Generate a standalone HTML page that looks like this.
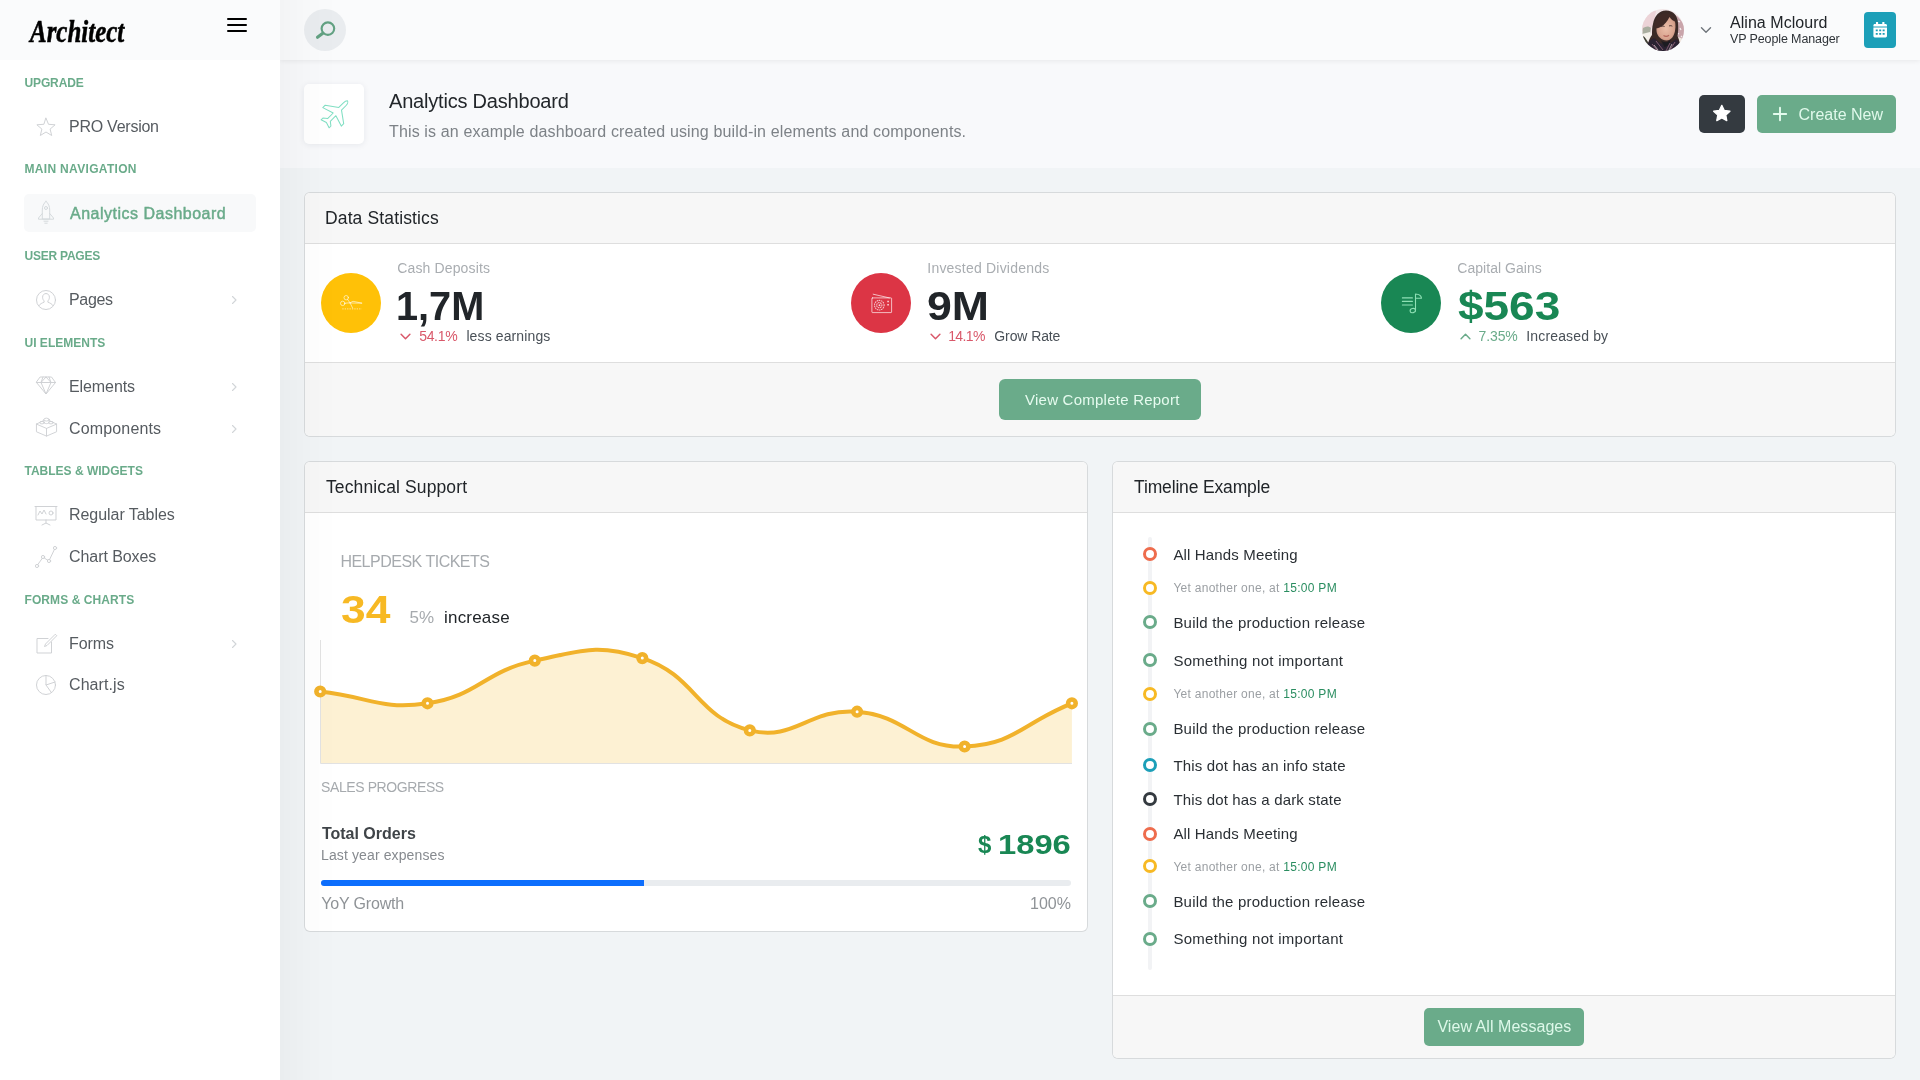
<!DOCTYPE html>
<html lang="en">
<head>
<meta charset="utf-8">
<title>Analytics Dashboard - Architect</title>
<style>
*{box-sizing:border-box;margin:0;padding:0}
html,body{width:1920px;height:1080px;overflow:hidden}
body{position:relative;background:#f1f4f6;font-family:"Liberation Sans",sans-serif;color:#212529;font-size:16px;-webkit-font-smoothing:antialiased}
.abs{position:absolute}
.t{position:absolute;white-space:nowrap;line-height:1}
svg{display:block;overflow:visible}

/* ---------- sidebar ---------- */
#sidebar{z-index:11;position:absolute;left:0;top:0;width:280px;height:1080px;background:#fff}
#sbshadow{z-index:10;position:absolute;left:0;top:-200px;width:280px;height:1480px;box-shadow:7px 0 60px rgba(0,0,0,.05)}
#sbhead{position:absolute;left:0;top:0;width:280px;height:60px;background:#fafbfc}
.logo{left:29.500px;top:14.500px;font-family:"Liberation Serif",serif;font-style:italic;font-weight:bold;font-size:32px;color:#000;-webkit-text-stroke:.55px #000;transform:scaleX(.78);transform-origin:0 0}
.burger{position:absolute;left:227px;top:18px;width:20px;height:14px}
.burger i{position:absolute;left:0;width:20px;height:2px;background:#000;border-radius:1px}
.sh{position:absolute;left:24.5px;font-weight:bold;font-size:12px;color:#6aab8a;white-space:nowrap;line-height:12px}
.mi{position:absolute;left:24px;width:232px;height:38px;border-radius:5px}
.mi.active{background:#f8f9fa}
.mi .lbl{position:absolute;left:45px;top:11px;font-size:16px;line-height:18px;color:#565b60;white-space:nowrap}
.mi.active .lbl{color:#6aab8a;-webkit-text-stroke:.45px #6aab8a}
.mi .ic{position:absolute;left:10px;top:8px;width:24px;height:24px}
.mi .ic svg{width:24px;height:24px;fill:none;stroke:#cdd0d3;stroke-width:.95;stroke-linecap:round;stroke-linejoin:round}
.mi .car{position:absolute;left:206px;top:14.500px;width:8px;height:10px}
.mi .car svg{width:8px;height:10px;fill:none;stroke:#d2d5d8;stroke-width:1.1;stroke-linecap:round;stroke-linejoin:round}

/* ---------- header ---------- */
#header{z-index:5;position:absolute;left:280px;top:0;width:1640px;height:60px;background:#fafbfc;box-shadow:0 1px 5px rgba(0,0,0,.07)}
.search{position:absolute;left:24px;top:9px;width:42px;height:42px;border-radius:50%;background:#e9ecef}
.avatar{position:absolute;left:1362px;top:9px;width:42px;height:42px;border-radius:50%;overflow:hidden}
.calbtn{position:absolute;left:1584px;top:12px;width:32px;height:36px;border-radius:4px;background:#1c9fb8}

/* ---------- page title ---------- */
#ptitle{position:absolute;left:280px;top:60px;width:1640px;height:108px;background:#f8f9fb}
.picon{position:absolute;left:24px;top:24px;width:60px;height:60px;background:#fff;border-radius:5px;box-shadow:0 1px 6px rgba(20,40,60,.08)}
.btn{position:absolute;border-radius:4px;color:#fff;white-space:nowrap}
.g{background:#6aab8a}

/* ---------- cards ---------- */
.card{position:absolute;background:#fff;border:1px solid rgba(0,0,0,.105);background-clip:padding-box;border-radius:6px;overflow:hidden}
.chead{position:absolute;left:0;top:0;right:0;height:51px;background:#f7f7f7;border-bottom:1px solid #dedede}
.chead span{position:absolute;left:20px;top:16px;font-size:17px;line-height:19px;color:#212529;white-space:nowrap;letter-spacing:.1px}
.cfoot{position:absolute;left:0;right:0;bottom:0;background:#f7f7f7;border-top:1px solid #dedede}
</style>
</head>
<body>
<div id="root" style="position:absolute;left:0;top:0;width:1920px;height:1080px;will-change:transform">

<!-- ================= SIDEBAR ================= -->
<div id="sbshadow"></div>
<aside id="sidebar">
  <div id="sbhead">
    <div class="t logo">Architect</div>
    <div class="burger"><i style="top:0"></i><i style="top:6px"></i><i style="top:12px"></i></div>
  </div>
  <div class="sh" style="top:77px;letter-spacing:-0.13px">UPGRADE</div>
  <div class="mi" style="top:107px">
    <div class="ic"><svg viewBox="0 0 24 24"><path d="M12 3.2l2.5 6.1 6.6.5-5 4.3 1.6 6.4L12 17l-5.7 3.5 1.6-6.4-5-4.3 6.6-.5z"/></svg></div>
    <div class="lbl" style="letter-spacing:-0.25px">PRO Version</div>
  </div>
  <div class="sh" style="top:163px;letter-spacing:0.32px">MAIN NAVIGATION</div>
  <div class="mi active" style="top:194px">
    <div class="ic" style="top:5.500px"><svg viewBox="0 0 24 24" style="stroke:#d3d8db"><path d="M12 1.300c-2.500 2.200-3.700 5.200-3.700 8.700v9h7.400v-9c0-3.500-1.200-6.500-3.700-8.700z"/><circle cx="12" cy="8" r="1.500"/><path d="M8.300 13.500l-3.800 4.500v1.200h15v-1.200l-3.800-4.500M10 21.200h4M10.800 23.200h2.400"/></svg></div>
    <div class="lbl" style="left:46px;letter-spacing:.5px">Analytics Dashboard</div>
  </div>
  <div class="sh" style="top:250px;letter-spacing:-0.23px">USER PAGES</div>
  <div class="mi" style="top:280px">
    <div class="ic"><svg viewBox="0 0 24 24"><circle cx="12" cy="12" r="9.500"/><path d="M12 5.500c-2 0-3.400 1.500-3.400 3.700 0 1.500.6 2.900 1.500 3.700v1.300c-1.800.7-4.300 1.700-5.100 3.400M12 5.500c2 0 3.400 1.500 3.400 3.700 0 1.500-.6 2.900-1.500 3.700v1.300c1.800.7 4.300 1.700 5.100 3.400"/></svg></div>
    <div class="lbl" style="letter-spacing:-0.33px">Pages</div>
    <div class="car"><svg viewBox="0 0 8 10"><path d="M2.500 1.500l3.500 3.500-3.500 3.500"/></svg></div>
  </div>
  <div class="sh" style="top:337px;letter-spacing:0.01px">UI ELEMENTS</div>
  <div class="mi" style="top:367px">
    <div class="ic" style="top:6.300px"><svg viewBox="0 0 24 24"><path d="M6.500 4h11l4 5.500-9.500 11.500-9.500-11.500z"/><path d="M2.500 9.500h19M9 4l-2 5.500 5 11.500 5-11.500-2-5.500M12 4l-5 5.500M12 4l5 5.500"/></svg></div>
    <div class="lbl" style="letter-spacing:-0.09px">Elements</div>
    <div class="car"><svg viewBox="0 0 8 10"><path d="M2.500 1.500l3.500 3.500-3.500 3.500"/></svg></div>
  </div>
  <div class="mi" style="top:409px">
    <div class="ic" style="top:6.200px;left:10.500px"><svg viewBox="0 0 24 24" style="width:23px;height:23px"><path d="M1.500 9.500l7-3.500M22.500 9.500l-7-3.500M1.500 9.500l10.500 4.500 10.500-4.500M1.500 9.500v8l10.500 4.500 10.500-4.500v-8M12 14v8"/><ellipse cx="12" cy="4.800" rx="2.800" ry="1.500"/><path d="M9.200 4.800v2.700c0 .8 1.300 1.500 2.800 1.500s2.800-.7 2.800-1.500v-2.700"/><ellipse cx="7.300" cy="8" rx="2.500" ry="1.300"/><ellipse cx="16.700" cy="8" rx="2.500" ry="1.300"/></svg></div>
    <div class="lbl" style="letter-spacing:0.15px">Components</div>
    <div class="car"><svg viewBox="0 0 8 10"><path d="M2.500 1.500l3.500 3.500-3.500 3.500"/></svg></div>
  </div>
  <div class="sh" style="top:465px;letter-spacing:0px">TABLES &amp; WIDGETS</div>
  <div class="mi" style="top:495px">
    <div class="ic"><svg viewBox="0 0 24 24"><path d="M1 3.500h22M2 3.500v13.500h20v-13.500M12 17v3M8 22l4-2 4 2"/><path d="M4 12l2-4 2 3 2-4 2 4"/><circle cx="17" cy="10" r="2"/></svg></div>
    <div class="lbl" style="letter-spacing:-0.05px">Regular Tables</div>
  </div>
  <div class="mi" style="top:537px">
    <div class="ic"><svg viewBox="0 0 24 24"><circle cx="3" cy="21" r="1.600"/><circle cx="9" cy="12" r="1.600"/><circle cx="15" cy="16" r="1.600"/><circle cx="21" cy="3" r="1.600"/><path d="M3.800 19.600l4.400-6.200M10.300 13l3.400 2.200M15.600 14.500l4.800-10"/></svg></div>
    <div class="lbl" style="letter-spacing:-0.07px">Chart Boxes</div>
  </div>
  <div class="sh" style="top:594px;letter-spacing:0.08px">FORMS &amp; CHARTS</div>
  <div class="mi" style="top:624px">
    <div class="ic"><svg viewBox="0 0 24 24"><path d="M17.500 10v11h-14.500v-14.500h11"/><path d="M21 2.500l-9.500 9.500-1 2.500 2.500-1 9.500-9.500z"/></svg></div>
    <div class="lbl" style="letter-spacing:-0.07px">Forms</div>
    <div class="car"><svg viewBox="0 0 8 10"><path d="M2.500 1.500l3.500 3.500-3.500 3.500"/></svg></div>
  </div>
  <div class="mi" style="top:665px">
    <div class="ic"><svg viewBox="0 0 24 24"><circle cx="12" cy="12" r="9.500"/><path d="M12 2.500v9.500l9 -3M12 12l5.500 7.700"/></svg></div>
    <div class="lbl" style="letter-spacing:0.08px">Chart.js</div>
  </div>
</aside>

<!-- ================= HEADER ================= -->
<header id="header">
  <div class="search">
    <svg class="abs" style="left:9px;top:9px" width="24" height="24" viewBox="0 0 24 24" fill="none" stroke="#62a182" stroke-linecap="round"><circle cx="14.900" cy="10.600" r="6.300" stroke-width="2.150"/><path d="M9.800 15.200l-5.300 4.100" stroke-width="3.100"/></svg>
  </div>
  <div class="avatar">
    <svg width="42" height="42" viewBox="0 0 42 42">
      <defs>
        <filter id="avb" x="-10%" y="-10%" width="120%" height="120%"><feGaussianBlur stdDeviation=".7"/></filter>
        <radialGradient id="avface" cx="50%" cy="50%" r="60%"><stop offset="0" stop-color="#ecbfa9"/><stop offset=".7" stop-color="#d9a48f"/><stop offset="1" stop-color="#b98572"/></radialGradient>
      </defs>
      <rect width="42" height="42" fill="#f1e6e7"/>
      <g filter="url(#avb)">
        <path d="M0 6c4-3 9-5 14-4l-3 16-11 4z" fill="#ecd3d7"/>
        <path d="M1 19c3-2 6-2 8 0l-1 6-8 2z" fill="#a9ad9f"/>
        <path d="M0 25l8-2 2 5-7 6-3-2z" fill="#f4f0ea"/>
        <path d="M33 6c4 2 7 6 9 11v14l-8 2z" fill="#c9a5ab"/>
        <path d="M36 12l2 1M38 19l1 2M35 24l2 1M39 27l1 1" stroke="#f5ecee" stroke-width="1.200"/>
        <path d="M34 28c3 0 6 1 8 3v5l-9-2z" fill="#efe6df"/>
        <path d="M1 27c2 1 4 4 6 8l-3 4-4-4z" fill="#3f4136"/>
        <path d="M6 42c-1-7 1-12 4-16 0-4 0-8 1-11 1.500-8 6-13.500 13-13.500 7.500 0 11.500 5 12 12.500.4 5 .2 9-.5 13 2 4 3 9 2.500 15z" fill="#3a2927"/>
        <path d="M14.500 22c-.5-8 2-13 6-15l11 1c2 4 2.500 9 1.500 14-.8 5-4 9.500-8.500 9.500-4.500 0-9.500-4-10-9.500z" fill="url(#avface)"/>
        <path d="M12 20c0-9 4-15 11-16 6 0 10 3 11 9-3-1-5-3-6.500-5-2 4-5 8-9 10-2 1-4.500 1.500-6.500 2z" fill="#3f2b28"/>
        <path d="M19 17.500c1-.5 2.500-.5 3.500 0M27 17c1-.5 2.500-.4 3.300.2" stroke="#4a3430" stroke-width="1" fill="none"/>
        <path d="M21.500 26.500c1.500 1 4 1 5.500-.2" stroke="#b4665c" stroke-width="1.100" fill="none"/>
        <path d="M4 42c0-6 3-11 8-13l6 5 6 2 6-3 4-3c3 2 5 6 5 12z" fill="#2c2330"/>
        <path d="M19 31.500c2 1.500 4.500 2 6.500 1.500l3-2-1 5-5 2z" fill="#1f1c21"/>
        <path d="M10 35l5 6M14 32l7 9M28 34l-4 8M33 33l-5 8M8 38l3 4" stroke="#8a5f78" stroke-width=".9"/>
        <path d="M12 36l4 5M30 35l-3 6" stroke="#e8d6de" stroke-width=".7"/>
      </g>
    </svg>
  </div>
  <svg class="abs" style="left:1420px;top:26px" width="12" height="8" viewBox="0 0 12 8" fill="none" stroke="#6f757b" stroke-width="1.400" stroke-linecap="round" stroke-linejoin="round"><path d="M1.500 1.800l4.500 4.400 4.500-4.400"/></svg>
  <div class="t" style="left:1450px;top:14px;font-size:16px;line-height:18px;color:#212529;letter-spacing:.04px">Alina Mclourd</div>
  <div class="t" style="left:1450px;top:31.600px;font-size:12.5px;line-height:14px;color:#2f3439;letter-spacing:-.12px">VP People Manager</div>
  <div class="calbtn">
    <svg class="abs" style="left:8.800px;top:9.900px" width="14.400" height="15.400" viewBox="0 0 15 17"><path fill="#fff" d="M3.200 0h1.600a.4.4 0 0 1 .4.400v1.700h4.600v-1.700a.4.4 0 0 1 .4-.4h1.600a.4.400 0 0 1 .4.400v1.700h1.300c.8 0 1.500.7 1.500 1.500v1.500h-15v-1.500c0-.8.700-1.500 1.500-1.500h1.300v-1.700a.4.400 0 0 1 .4-.4zM0 6.200h15v9.300c0 .8-.7 1.500-1.500 1.500h-12c-.8 0-1.500-.7-1.500-1.500zM2.600 8.400v1.900h2.200v-1.900zM6.400 8.400v1.900h2.200v-1.900zM10.200 8.400v1.900h2.200v-1.900zM2.600 12.200v1.900h2.200v-1.900zM6.400 12.200v1.900h2.200v-1.900zM10.200 12.200v1.900h2.200v-1.900z" fill-rule="evenodd"/></svg>
  </div>
</header>

<!-- ================= PAGE TITLE ================= -->
<section id="ptitle">
  <div class="picon">
    <svg class="abs" style="left:14px;top:14px" width="32" height="32" viewBox="0 0 32 32" fill="none" stroke="#80dfc3" stroke-width="1.050" stroke-linejoin="round" stroke-linecap="round"><path d="M29.300 2.700c1 1 .3 3.300-1.200 4.800l-4.600 4.600 2.200 13.600-2.400 2.400-5.400-10.400-5.600 5.600.6 4.700-1.800 1.800-2.700-5.300-5.300-2.700 1.800-1.800 4.700.6 5.600-5.600-10.400-5.400 2.400-2.400 13.600 2.200 4.600-4.600c1.500-1.500 2.900-2.100 3.900-2.100z"/></svg>
  </div>
  <div class="t" style="left:109px;top:30px;font-size:20px;line-height:22px;color:#23272b;letter-spacing:-.2px">Analytics Dashboard</div>
  <div class="t" style="left:109px;top:63px;font-size:16px;line-height:18px;color:#7d8287;letter-spacing:.14px">This is an example dashboard created using build-in elements and components.</div>
  <div class="btn" style="left:1419px;top:35px;width:46px;height:38px;background:#343a40;border-radius:5px">
    <svg class="abs" style="left:13.200px;top:9.400px" width="19.600" height="18.500" viewBox="0 0 18 17"><path fill="#fff" stroke="#fff" stroke-width="1.200" stroke-linejoin="round" d="M9 1.200l2.300 4.700 5.200.7-3.800 3.600.9 5.100-4.600-2.500-4.600 2.500.9-5.100-3.800-3.600 5.200-.7z"/></svg>
  </div>
  <div class="btn g" style="left:1477px;top:35px;width:139px;height:38px;border-radius:5px">
    <svg class="abs" style="left:15.500px;top:12px" width="14" height="14" viewBox="0 0 14 14" stroke="#e4fbee" stroke-width="1.900" stroke-linecap="round"><path d="M7 .8v12.400M.8 7h12.400"/></svg>
    <div class="t" style="left:41.500px;top:11px;font-size:16px;line-height:18px;color:#e0f9eb">Create New</div>
  </div>
</section>

<!-- ================= CARDS ================= -->
<!--C1S-->
<section class="card" style="left:304px;top:192px;width:1592px;height:245px">
  <div class="chead"></div>
  <div class="t" style="left:20.0px;top:16.6px;font-size:17.5px;color:#212529;letter-spacing:0.13px;">Data Statistics</div>
  <div class="abs" style="left:16px;top:80px;width:60px;height:60px;border-radius:50%;background:#ffc107"><svg class="abs" style="left:18.700px;top:22.200px" width="22.300" height="15" viewBox="0 0 22.300 15" fill="none" stroke="#fff" stroke-opacity=".62" stroke-width=".95" stroke-linecap="round" stroke-linejoin="round"><circle cx="6.200" cy="2.700" r="2.200"/><circle cx="2.700" cy="8.400" r="2.200"/><path d="M7.600 4.500l2.400 3.300 2.600 5.200M4.900 8.200l5.100-.4M10 7.800l3-1.500 8.700 1.800z"/><path d="M2.300 13.900h19.400" stroke-dasharray="1.300 1.100" stroke-linecap="butt"/></svg></div>
  <div class="t" style="left:92.3px;top:68.2px;font-size:14px;color:#a9adb1;letter-spacing:0.13px;">Cash Deposits</div>
  <div class="t" style="left:91.1px;top:93.3px;font-size:40px;color:#212529;font-weight:bold;transform:scaleX(0.992);transform-origin:0 0;">1,7M</div>
  <svg class="abs" style="left:95.2px;top:140px" width="11" height="7" viewBox="0 0 10.800 7" fill="none" stroke="#d9586a" stroke-width="1.500" stroke-linecap="round" stroke-linejoin="round"><path d="M1 1.300l4.400 4.400 4.400-4.400"/></svg>
  <div class="t" style="left:114.2px;top:136.1px;font-size:14px;color:#d9586a;letter-spacing:-0.32px;">54.1%</div>
  <div class="t" style="left:161.4px;top:136.1px;font-size:14px;color:#495057;letter-spacing:0.12px;">less earnings</div>
  <div class="abs" style="left:546px;top:80px;width:60px;height:60px;border-radius:50%;background:#dc3545"><svg class="abs" style="left:19.500px;top:19.500px" width="21" height="20" viewBox="0 0 21 20" fill="none" stroke="#fff" stroke-opacity=".7" stroke-width=".95" stroke-linecap="round" stroke-linejoin="round"><rect x=".9" y="4.900" width="19.700" height="14.700" rx=".6"/><path d="M2.200 1.200l16.200 3.700"/><circle cx="8.300" cy="12.200" r="4.800" stroke-dasharray=".7 1.500" stroke-width="1.100"/><circle cx="8.300" cy="12.200" r="2.600" stroke-dasharray=".7 1.500" stroke-width="1.100"/><circle cx="8.300" cy="12.200" r=".5"/><path d="M16.200 8.500h1.800M16.200 11.800h1.800" stroke-width="1.500" stroke-linecap="butt"/></svg></div>
  <div class="t" style="left:622.3px;top:68.2px;font-size:14px;color:#a9adb1;letter-spacing:0.21px;">Invested Dividends</div>
  <div class="t" style="left:622.0px;top:93.3px;font-size:40px;color:#212529;font-weight:bold;transform:scaleX(1.116);transform-origin:0 0;">9M</div>
  <svg class="abs" style="left:625.2px;top:140px" width="11" height="7" viewBox="0 0 10.800 7" fill="none" stroke="#d9586a" stroke-width="1.500" stroke-linecap="round" stroke-linejoin="round"><path d="M1 1.300l4.400 4.400 4.400-4.400"/></svg>
  <div class="t" style="left:643.2px;top:136.1px;font-size:14px;color:#d9586a;letter-spacing:-0.64px;">14.1%</div>
  <div class="t" style="left:689.3px;top:136.1px;font-size:14px;color:#495057;letter-spacing:-0.1px;">Grow Rate</div>
  <div class="abs" style="left:1076px;top:80px;width:60px;height:60px;border-radius:50%;background:#198754"><svg class="abs" style="left:19.500px;top:19.500px" width="21" height="21" viewBox="0 0 21 21" fill="none" stroke="#8fe0b5" stroke-width="1.100" stroke-linecap="round" stroke-linejoin="round"><path d="M1.400 4.900h10M1.400 8.400h10M1.400 12h10"/><path d="M14.500 17v-16c3 .2 5.600 1.800 5.900 3.800v.5h-5.900"/><ellipse cx="11.800" cy="17.600" rx="2.700" ry="2.100" transform="rotate(-15 11.800 17.600)"/></svg></div>
  <div class="t" style="left:1152.3px;top:68.2px;font-size:14px;color:#a9adb1;letter-spacing:0.03px;">Capital Gains</div>
  <div class="t" style="left:1152.9px;top:93.3px;font-size:40px;color:#198754;font-weight:bold;transform:scaleX(1.149);transform-origin:0 0;">$563</div>
  <svg class="abs" style="left:1155.2px;top:140px" width="11" height="7" viewBox="0 0 10.800 7" fill="none" stroke="#6aab8a" stroke-width="1.500" stroke-linecap="round" stroke-linejoin="round"><path d="M1 5.700l4.400-4.400 4.400 4.400"/></svg>
  <div class="t" style="left:1173.6px;top:136.1px;font-size:14px;color:#6aab8a;letter-spacing:-0.14px;">7.35%</div>
  <div class="t" style="left:1221.3px;top:136.1px;font-size:14px;color:#495057;letter-spacing:0.15px;">Increased by</div>
  <div class="cfoot" style="height:74px"></div>
  <div class="btn g" style="left:694px;top:186px;width:202px;height:41px;border-radius:6px"><div class="t" style="left:26.0px;top:12.7px;font-size:15px;color:#e6fbef;letter-spacing:0.24px;">View Complete Report</div></div>
</section>
<!--C1E-->
<!--C2S-->
<section class="card" style="left:304px;top:461px;width:784px;height:471px">
  <div class="chead"></div>
  <div class="t" style="left:21.0px;top:17.2px;font-size:17.5px;color:#212529;letter-spacing:0.12px;">Technical Support</div>
  <div class="t" style="left:35.4px;top:91.6px;font-size:16px;color:#a6aaae;letter-spacing:-0.5px;">HELPDESK TICKETS</div>
  <div class="t" style="left:36.4px;top:128.8px;font-size:38.5px;color:#f7b924;font-weight:bold;transform:scaleX(1.153);transform-origin:0 0;">34</div>
  <div class="t" style="left:104.6px;top:147.0px;font-size:17px;color:#a6aaae;">5%</div>
  <div class="t" style="left:139.0px;top:147.0px;font-size:17px;color:#212529;letter-spacing:0.2px;">increase</div>
  <svg class="abs" style="left:0;top:0" width="782" height="469" viewBox="0 0 782 469">
    <path d="M15.2 229.5C64.6 234.9 74.8 248.2 122.5 241.3C173.5 234.0 178.6 209.4 229.8 198.6C277.4 188.6 292.4 181.5 337.3 196.1C391.3 213.6 391.1 255.0 444.8 268.4C489.9 279.7 503.6 246.1 552.1 249.7C602.4 253.5 610.8 286.4 659.6 284.5C709.6 282.5 717.5 261.2 766.9 241.3L766.9 301L15.2 301Z" fill="#fdf1d3"/>
    <path d="M15.5 178V301.5H767" fill="none" stroke="#e2e2e2" stroke-width="1"/>
    <path d="M15.2 229.5C64.6 234.9 74.8 248.2 122.5 241.3C173.5 234.0 178.6 209.4 229.8 198.6C277.4 188.6 292.4 181.5 337.3 196.1C391.3 213.6 391.1 255.0 444.8 268.4C489.9 279.7 503.6 246.1 552.1 249.7C602.4 253.5 610.8 286.4 659.6 284.5C709.6 282.5 717.5 261.2 766.9 241.3" fill="none" stroke="#f1b22b" stroke-width="4" stroke-linecap="round" stroke-linejoin="round"/>
    <circle cx="15.2" cy="229.5" r="3.800" fill="#fff" stroke="#f1b22b" stroke-width="4.600"/>
    <circle cx="122.5" cy="241.3" r="3.800" fill="#fff" stroke="#f1b22b" stroke-width="4.600"/>
    <circle cx="229.8" cy="198.6" r="3.800" fill="#fff" stroke="#f1b22b" stroke-width="4.600"/>
    <circle cx="337.3" cy="196.1" r="3.800" fill="#fff" stroke="#f1b22b" stroke-width="4.600"/>
    <circle cx="444.8" cy="268.4" r="3.800" fill="#fff" stroke="#f1b22b" stroke-width="4.600"/>
    <circle cx="552.1" cy="249.7" r="3.800" fill="#fff" stroke="#f1b22b" stroke-width="4.600"/>
    <circle cx="659.6" cy="284.5" r="3.800" fill="#fff" stroke="#f1b22b" stroke-width="4.600"/>
    <circle cx="766.9" cy="241.3" r="3.800" fill="#fff" stroke="#f1b22b" stroke-width="4.600"/>
  </svg>
  <div class="t" style="left:16.0px;top:317.8px;font-size:14px;color:#a6aaae;letter-spacing:-0.4px;">SALES PROGRESS</div>
  <div class="t" style="left:16.9px;top:364.2px;font-size:16px;color:#3f4448;font-weight:bold;">Total Orders</div>
  <div class="t" style="left:16.0px;top:386.1px;font-size:14px;color:#868a8f;letter-spacing:0.12px;">Last year expenses</div>
  <div class="t" style="left:673.1px;top:371.0px;font-size:24px;color:#198754;font-weight:bold;">$</div>
  <div class="t" style="left:692.6px;top:369.3px;font-size:27.5px;color:#198754;font-weight:bold;transform:scaleX(1.19);transform-origin:0 0;">1896</div>
  <div class="abs" style="left:16px;top:418px;width:750px;height:6px;border-radius:3px;background:#e9ecef;overflow:hidden"><div style="width:323px;height:6px;background:#0d6efd"></div></div>
  <div class="t" style="left:16.3px;top:434.1px;font-size:16px;color:#8f9397;letter-spacing:-0.18px;">YoY Growth</div>
  <div class="t" style="left:725.0px;top:434.1px;font-size:16px;color:#8f9397;">100%</div>
</section>
<!--C2E-->
<!--C3S-->
<section class="card" style="left:1112px;top:461px;width:784px;height:598px">
  <div class="chead"></div>
  <div class="t" style="left:21.0px;top:17.2px;font-size:17.5px;color:#212529;letter-spacing:-0.15px;">Timeline Example</div>
  <div class="abs" style="left:35px;top:75px;width:4px;height:433px;background:#f2f3f5;border-radius:2px"></div>
  <div class="abs" style="left:30px;top:85.1px;width:14px;height:14px;border-radius:50%;border:3px solid #ee6c4d;background:#fff"></div>
  <div class="t" style="left:60.4px;top:85.0px;font-size:15px;color:#2a2f34;letter-spacing:0.16px;">All Hands Meeting</div>
  <div class="abs" style="left:30px;top:118.7px;width:14px;height:14px;border-radius:50%;border:3px solid #f7b924;background:#fff"></div>
  <div class="t" style="left:60.4px;top:119.9px;font-size:12px;color:#9b9fa3;letter-spacing:0.28px;">Yet another one, at <span style="color:#2a8d60">15:00 PM</span></div>
  <div class="abs" style="left:30px;top:153.4px;width:14px;height:14px;border-radius:50%;border:3px solid #6aab8a;background:#fff"></div>
  <div class="t" style="left:60.4px;top:153.3px;font-size:15px;color:#2a2f34;letter-spacing:0.21px;">Build the production release</div>
  <div class="abs" style="left:30px;top:191.2px;width:14px;height:14px;border-radius:50%;border:3px solid #6aab8a;background:#fff"></div>
  <div class="t" style="left:60.4px;top:191.1px;font-size:15px;color:#2a2f34;letter-spacing:0.28px;">Something not important</div>
  <div class="abs" style="left:30px;top:224.6px;width:14px;height:14px;border-radius:50%;border:3px solid #f7b924;background:#fff"></div>
  <div class="t" style="left:60.4px;top:225.8px;font-size:12px;color:#9b9fa3;letter-spacing:0.28px;">Yet another one, at <span style="color:#2a8d60">15:00 PM</span></div>
  <div class="abs" style="left:30px;top:259.5px;width:14px;height:14px;border-radius:50%;border:3px solid #6aab8a;background:#fff"></div>
  <div class="t" style="left:60.4px;top:259.4px;font-size:15px;color:#2a2f34;letter-spacing:0.21px;">Build the production release</div>
  <div class="abs" style="left:30px;top:296.2px;width:14px;height:14px;border-radius:50%;border:3px solid #1c9fb8;background:#fff"></div>
  <div class="t" style="left:60.4px;top:296.1px;font-size:15px;color:#2a2f34;letter-spacing:0.18px;">This dot has an info state</div>
  <div class="abs" style="left:30px;top:330.3px;width:14px;height:14px;border-radius:50%;border:3px solid #343a40;background:#fff"></div>
  <div class="t" style="left:60.4px;top:330.2px;font-size:15px;color:#2a2f34;letter-spacing:0.16px;">This dot has a dark state</div>
  <div class="abs" style="left:30px;top:364.5px;width:14px;height:14px;border-radius:50%;border:3px solid #ee6c4d;background:#fff"></div>
  <div class="t" style="left:60.4px;top:364.4px;font-size:15px;color:#2a2f34;letter-spacing:0.16px;">All Hands Meeting</div>
  <div class="abs" style="left:30px;top:397.4px;width:14px;height:14px;border-radius:50%;border:3px solid #f7b924;background:#fff"></div>
  <div class="t" style="left:60.4px;top:398.6px;font-size:12px;color:#9b9fa3;letter-spacing:0.28px;">Yet another one, at <span style="color:#2a8d60">15:00 PM</span></div>
  <div class="abs" style="left:30px;top:432.4px;width:14px;height:14px;border-radius:50%;border:3px solid #6aab8a;background:#fff"></div>
  <div class="t" style="left:60.4px;top:432.3px;font-size:15px;color:#2a2f34;letter-spacing:0.21px;">Build the production release</div>
  <div class="abs" style="left:30px;top:469.5px;width:14px;height:14px;border-radius:50%;border:3px solid #6aab8a;background:#fff"></div>
  <div class="t" style="left:60.4px;top:469.4px;font-size:15px;color:#2a2f34;letter-spacing:0.28px;">Something not important</div>
  <div class="cfoot" style="height:63px"></div>
  <div class="btn g" style="left:311px;top:545.75px;width:160px;height:38px;border-radius:5px"><div class="t" style="left:13.4px;top:11.6px;font-size:16px;color:#ddf8e9;letter-spacing:0.05px;">View All Messages</div></div>
</section>
<!--C3E-->

</div>
</body>
</html>
